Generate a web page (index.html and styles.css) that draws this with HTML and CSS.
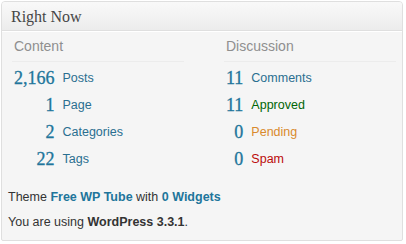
FILE: index.html
```html
<!DOCTYPE html>
<html>
<head>
<meta charset="utf-8">
<link rel="stylesheet" href="styles.css">
</head>
<body>
<div class="postbox">
  <h3 class="hndle">Right Now</h3>
  <div class="inside">
    <div class="tables">
      <div class="col">
        <p class="sub">Content</p>
        <div class="rows">
          <a class="num">2,166</a><a class="label">Posts</a>
          <a class="num">1</a><a class="label">Page</a>
          <a class="num">2</a><a class="label">Categories</a>
          <a class="num">22</a><a class="label">Tags</a>
        </div>
      </div>
      <div class="col">
        <p class="sub">Discussion</p>
        <div class="rows">
          <a class="num">11</a><a class="label">Comments</a>
          <a class="num">11</a><a class="label approved">Approved</a>
          <a class="num">0</a><a class="label waiting">Pending</a>
          <a class="num">0</a><a class="label spam">Spam</a>
        </div>
      </div>
    </div>
    <div class="versions">
      <p>Theme <a class="strong">Free WP Tube</a> with <a class="strong">0 Widgets</a></p>
      <p>You are using <b class="dark">WordPress 3.3.1</b>.</p>
    </div>
  </div>
</div>
</body>
</html>
```
FILE: styles.css
```css
html, body {
  margin: 0;
  padding: 0;
  background: #ffffff;
}
body {
  padding: 1px 3px 3px 1px;
  font-family: "Liberation Sans", Arial, sans-serif;
  color: #333333;
}
.postbox {
  width: 402px;
  box-sizing: border-box;
  border: 1px solid #dfdfdf;
  border-radius: 4px 4px 2px 2px;
  background: #f5f5f5;
  overflow: hidden;
}
.hndle {
  margin: 0;
  height: 27px;
  padding: 1px 0 0 9px;
  line-height: 27px;
  font-family: "Liberation Serif", Georgia, serif;
  font-size: 16px;
  font-weight: normal;
  color: #464646;
  background: linear-gradient(to bottom, #f9f9f9, #ececec);
  border-bottom: 1px solid #dfdfdf;
  box-shadow: 0 1px 0 #ffffff;
}
.tables {
  display: grid;
  grid-template-columns: 172px 172px;
  column-gap: 40px;
  padding-left: 10px;
}
.sub {
  margin: 0;
  padding: 5px 2px;
  line-height: 20px;
  font-size: 14px;
  color: #8f8f8f;
  border-bottom: 1px solid #ececec;
}
.rows {
  margin-top: 3px;
  display: grid;
  grid-template-columns: auto 1fr;
  grid-auto-rows: 27px;
  column-gap: 8px;
  align-items: center;
  padding-left: 2px;
}
.num {
  text-align: right;
  font-family: "Liberation Serif", Georgia, serif;
  font-size: 18px;
  line-height: 27px;
  color: #21759b;
  -webkit-text-stroke: 0.3px #21759b;
}
.label {
  font-size: 12.5px;
  line-height: 27px;
  color: #2a6f90;
}
.approved { color: #006505; }
.waiting { color: #d98a2c; }
.spam { color: #bc0b0b; }
.versions {
  margin-top: 12px;
  padding: 0 0 5px 6px;
}
.versions p {
  margin: 0;
  line-height: 25px;
  font-size: 12.5px;
}
.strong {
  font-weight: bold;
  color: #21759b;
}
.dark {
  color: #333333;
}
```
